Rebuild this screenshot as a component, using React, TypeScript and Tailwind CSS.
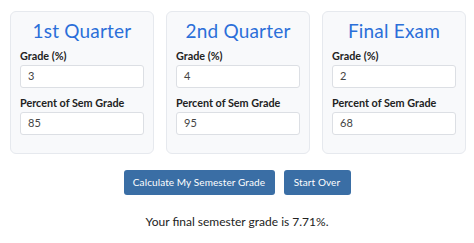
import React from "react";

const cards = [
  { title: "1st Quarter", grade: "3", pct: "85" },
  { title: "2nd Quarter", grade: "4", pct: "95" },
  { title: "Final Exam", grade: "2", pct: "68" },
];

export default function App() {
  return (
    <div
      className="w-[474px] h-[243px] bg-white overflow-hidden"
      style={{ fontFamily: '"Lato", "Open Sans", sans-serif' }}
    >
      <div className="flex gap-[12px] pl-[10px] pt-[11px]">
        {cards.map((c) => (
          <div
            key={c.title}
            className="w-[144px] h-[143px] rounded-[6px] border border-[#e6e9ee] bg-[#f8f9fb] px-[9px] pt-[7px]"
          >
            <div className="text-center text-[19px] leading-[24px] text-[#2b6fd9] tracking-[0.2px]">
              {c.title}
            </div>
            <div className="mt-[5px] text-[10.8px] leading-[15px] font-bold text-[#222]">
              Grade (%)
            </div>
            <div className="mt-[2px] h-[23px] rounded-[3px] border border-[#dcdfe4] bg-white pl-[7px] flex items-center text-[11px] text-[#444]">
              {c.grade}
            </div>
            <div className="mt-[7px] text-[10.8px] leading-[15px] font-bold text-[#222]">
              Percent of Sem Grade
            </div>
            <div className="mt-[2px] h-[23px] rounded-[3px] border border-[#dcdfe4] bg-white pl-[7px] flex items-center text-[11px] text-[#444]">
              {c.pct}
            </div>
          </div>
        ))}
      </div>
      <div className="mt-[16px] flex justify-center gap-[9px]">
        <button className="w-[151px] h-[25px] rounded-[3px] bg-[#3a6ea5] text-white text-[10px] tracking-[0.1px]">
          Calculate My Semester Grade
        </button>
        <button className="w-[67px] h-[25px] rounded-[3px] bg-[#3a6ea5] text-white text-[10px] tracking-[0.1px]">
          Start Over
        </button>
      </div>
      <div className="mt-[18px] text-center text-[12px] leading-[18px] text-[#222]">
        Your final semester grade is 7.71%.
      </div>
    </div>
  );
}
